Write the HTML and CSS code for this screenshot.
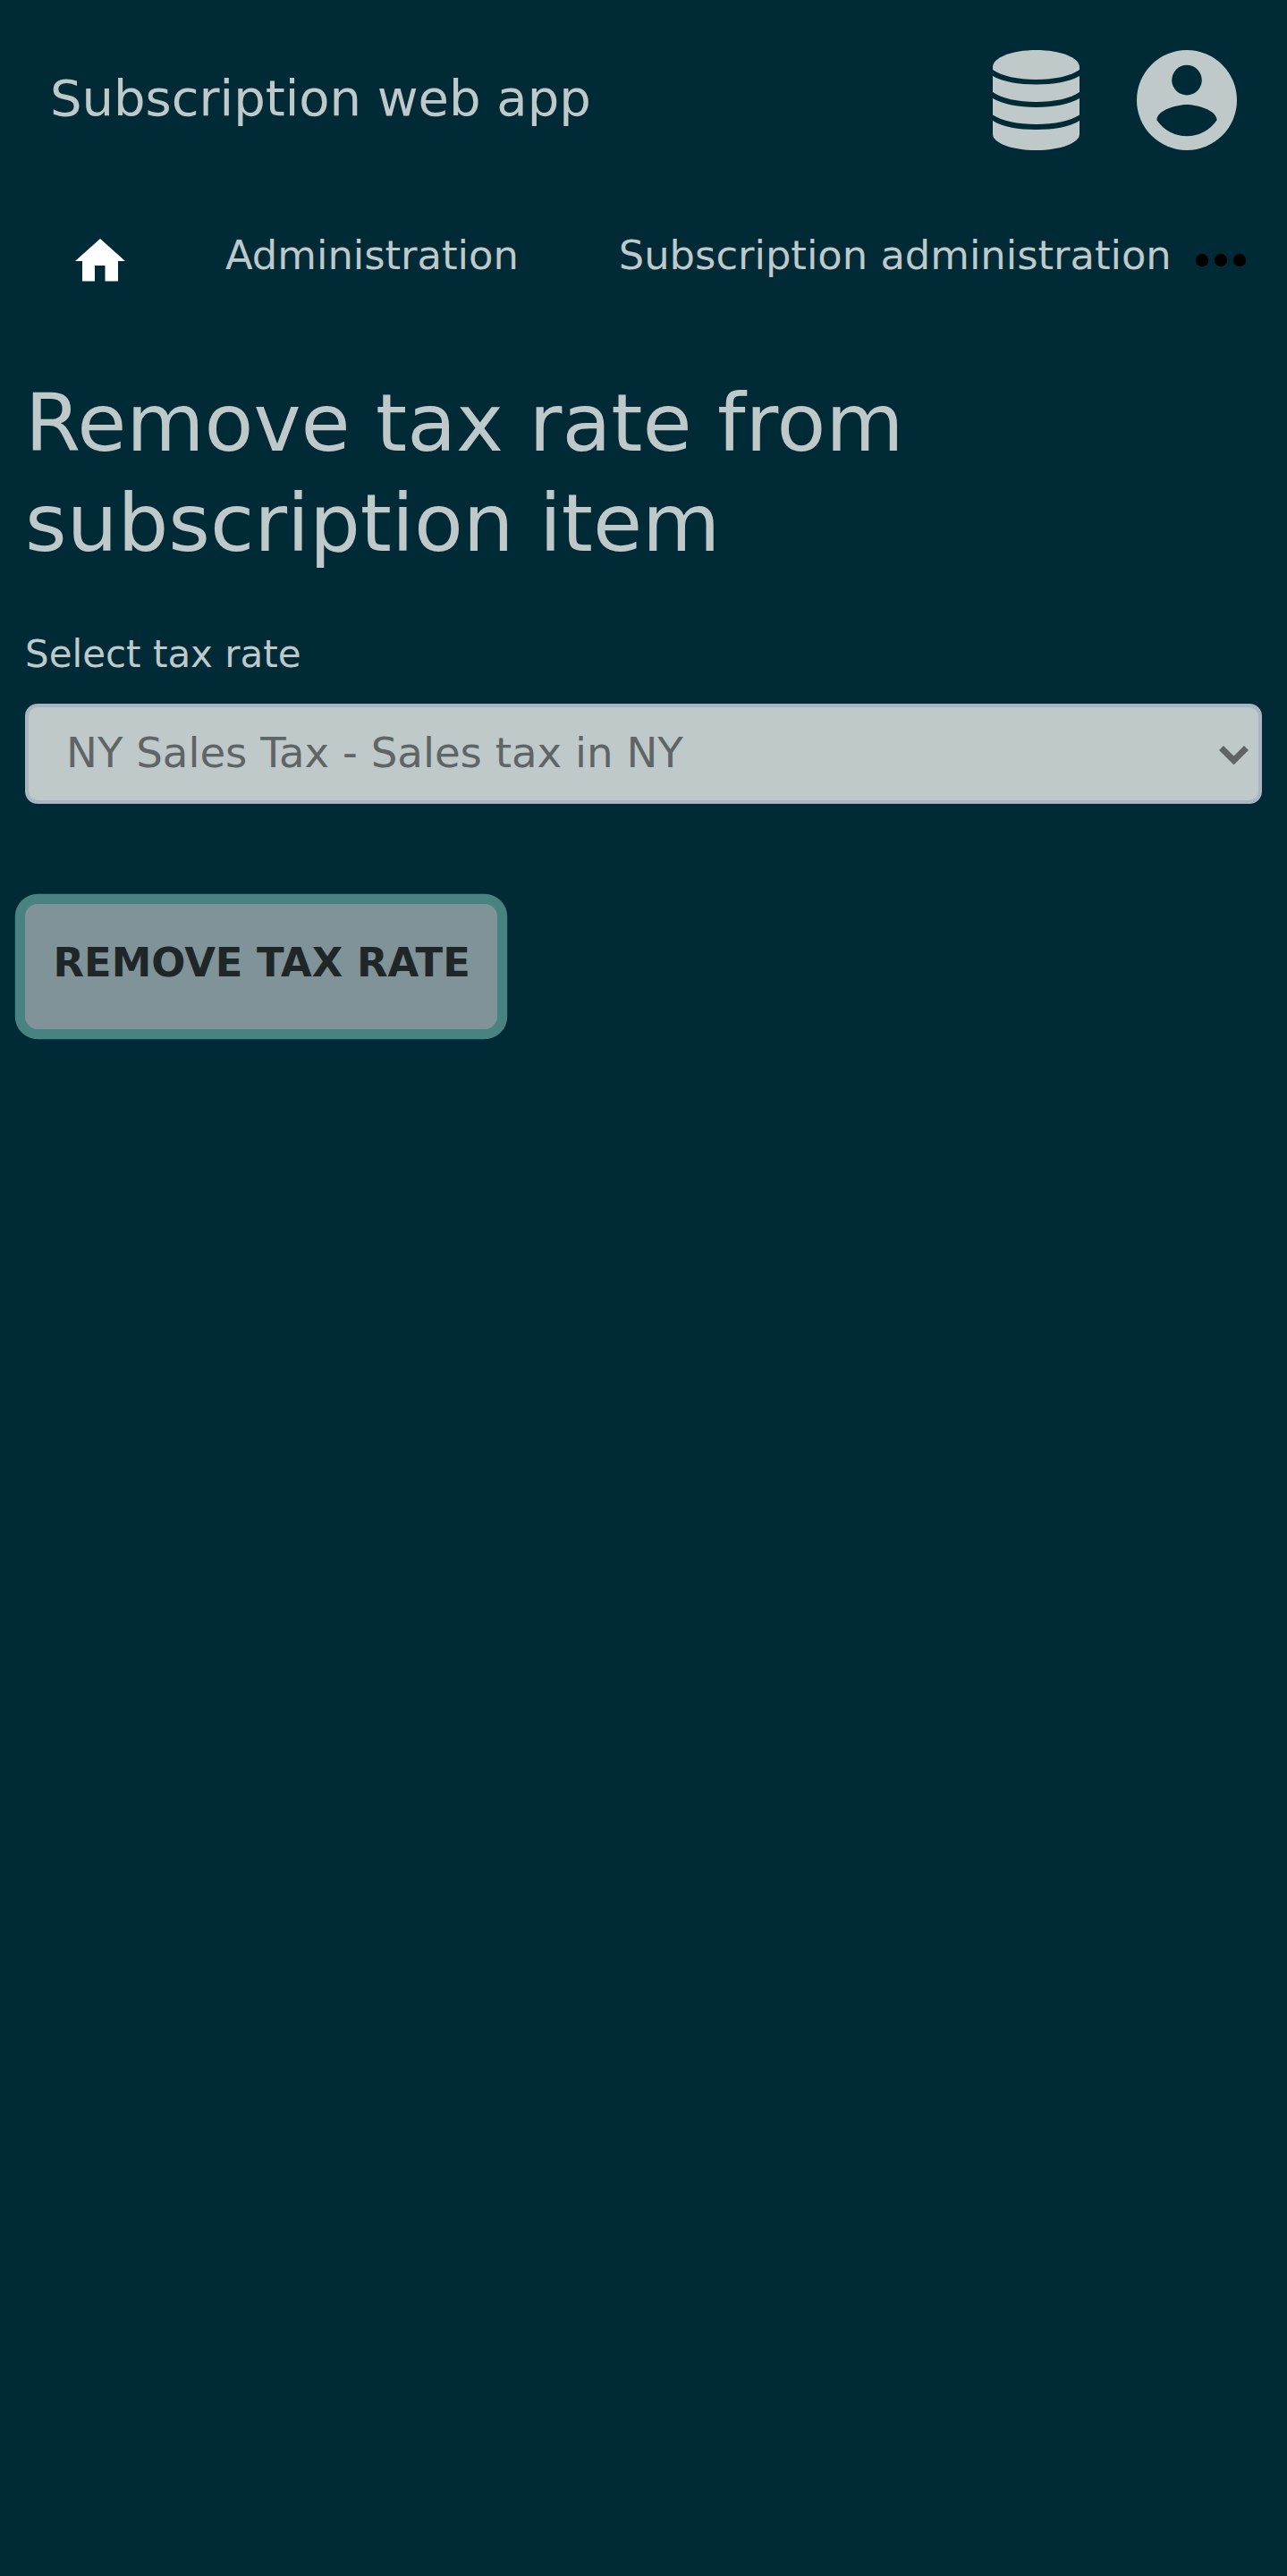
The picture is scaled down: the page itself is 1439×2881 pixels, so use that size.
FILE: index.html
```html
<!DOCTYPE html>
<html lang="en">
<head>
<meta charset="utf-8">
<title>Subscription web app</title>
<link rel="stylesheet" href="styles.css">
</head>
<body>
<header class="header">
  <span class="brand">Subscription web app</span>
  <div class="actions">
    <svg class="icon-db" viewBox="0 0 97 112" aria-hidden="true">
      <path d="M0 19C0 8.500 21.500 0 48.500 0S97 8.500 97 19V22C87 29 69 33 48.500 33S10 29 0 22Z"/>
      <path d="M0 29C11 35.500 29 38.500 48.500 38.500S86 35.500 97 29V47C87 54 69 58 48.500 58S10 54 0 47Z"/>
      <path d="M0 54C11 60.500 29 64 48.500 64S86 60.500 97 54V72.500C87 79 69 83 48.500 83S10 79 0 72.500Z"/>
      <path d="M0 79C11 86 29 89 48.500 89S86 86 97 79V94C97 104 75.500 112 48.500 112S0 104 0 94Z"/>
    </svg>
    <svg class="icon-user" viewBox="0 0 20 20" aria-hidden="true">
      <path fill-rule="evenodd" d="M10 0a10 10 0 1 0 0 20 10 10 0 1 0 0-20zM10 3a3 3 0 1 1 0 6 3 3 0 1 1 0-6zM10 17.200a7.200 7.200 0 0 1-6-3.220c.03-1.990 4-3.080 6-3.080s5.970 1.090 6 3.080a7.200 7.200 0 0 1-6 3.220z"/>
    </svg>
  </div>
</header>
<nav class="nav">
  <a class="nav-home" aria-label="Home"><svg viewBox="0 0 56 48"><path d="M28 0 56 25H48V47.500H33.500V30H22V47.500H8V25H0Z"/></svg></a>
  <a class="nav-link">Administration</a>
  <a class="nav-link">Subscription administration</a>
  <svg class="nav-more" viewBox="0 0 56 16" aria-hidden="true"><circle cx="7" cy="8" r="7.200"/><circle cx="28" cy="8" r="7.200"/><circle cx="49" cy="8" r="7.200"/></svg>
</nav>
<main class="main">
  <h1 class="title">Remove tax rate from subscription item</h1>
  <label class="label" for="rate">Select tax rate</label>
  <div class="field">
    <select class="select" id="rate"><option>NY Sales Tax - Sales tax in NY</option></select>
    <svg class="chevron" viewBox="0 0 33 21" aria-hidden="true"><path d="M2.500 2.500 16.500 16.500 30.500 2.500"/></svg>
  </div>
  <button class="button" type="button">REMOVE TAX RATE</button>
</main>
</body>
</html>
```
FILE: styles.css
```css
* { box-sizing: border-box; }
body {
  margin: 0;
  min-height: 2881px;
  background: #002b36;
  color: #bfc9ca;
  font-family: "DejaVu Sans", sans-serif;
  font-size: 44.8px;
}
.header {
  display: flex;
  justify-content: space-between;
  align-items: center;
  height: 224px;
  padding: 0 56px;
}
.brand { font-size: 56px; line-height: 84px; margin-top: -4px; }
.actions { display: flex; align-items: center; gap: 64px; fill: #bfc9ca; }
.icon-db { width: 97px; height: 112px; }
.icon-user { width: 112px; height: 112px; }
.nav {
  display: flex;
  align-items: center;
  height: 124px;
  white-space: nowrap;
}
.nav-home { display: flex; padding: 9px 56px 0 84px; fill: #fff; }
.nav-home svg { width: 56px; height: 48px; }
.nav-link { padding: 0 56px 1px; }
.nav-link:nth-of-type(3) { padding-right: 27px; }
.nav-more { width: 56px; height: 16px; margin-top: 9px; fill: #000; overflow: visible; }
.main {
  display: flex;
  flex-direction: column;
  align-items: flex-start;
  padding: 69px 28px 0;
}
.title { margin: 0; font-size: 89.6px; font-weight: 400; line-height: 112px; }
.label { margin-top: 59px; font-size: 42px; line-height: 63px; }
.field { display: grid; width: 100%; margin-top: 24px; align-items: center; }
.select {
  grid-area: 1 / 1;
  width: 100%;
  height: 112px;
  padding: 0 42px 2px;
  appearance: none;
  border: 4px solid #a9b5c3;
  border-radius: 14px;
  background: #bfc9ca;
  color: #5f6567;
  font: 46.67px "DejaVu Sans", sans-serif;
}
.chevron {
  grid-area: 1 / 1;
  justify-self: end;
  width: 33px;
  height: 21px;
  margin: 2px 15px 0 0;
  fill: none;
  stroke: #5f6567;
  stroke-width: 7;
  pointer-events: none;
}
.button {
  width: 528.4px;
  height: 140px;
  margin-top: 112.4px;
  padding: 0 0 10.5px 1px;
  border: 0;
  border-radius: 14px;
  background: #7f9399;
  box-shadow: 0 0 0 11.2px #488381;
  color: #1f2628;
  font: bold 44.8px "DejaVu Sans", sans-serif;
  white-space: nowrap;
}
```
